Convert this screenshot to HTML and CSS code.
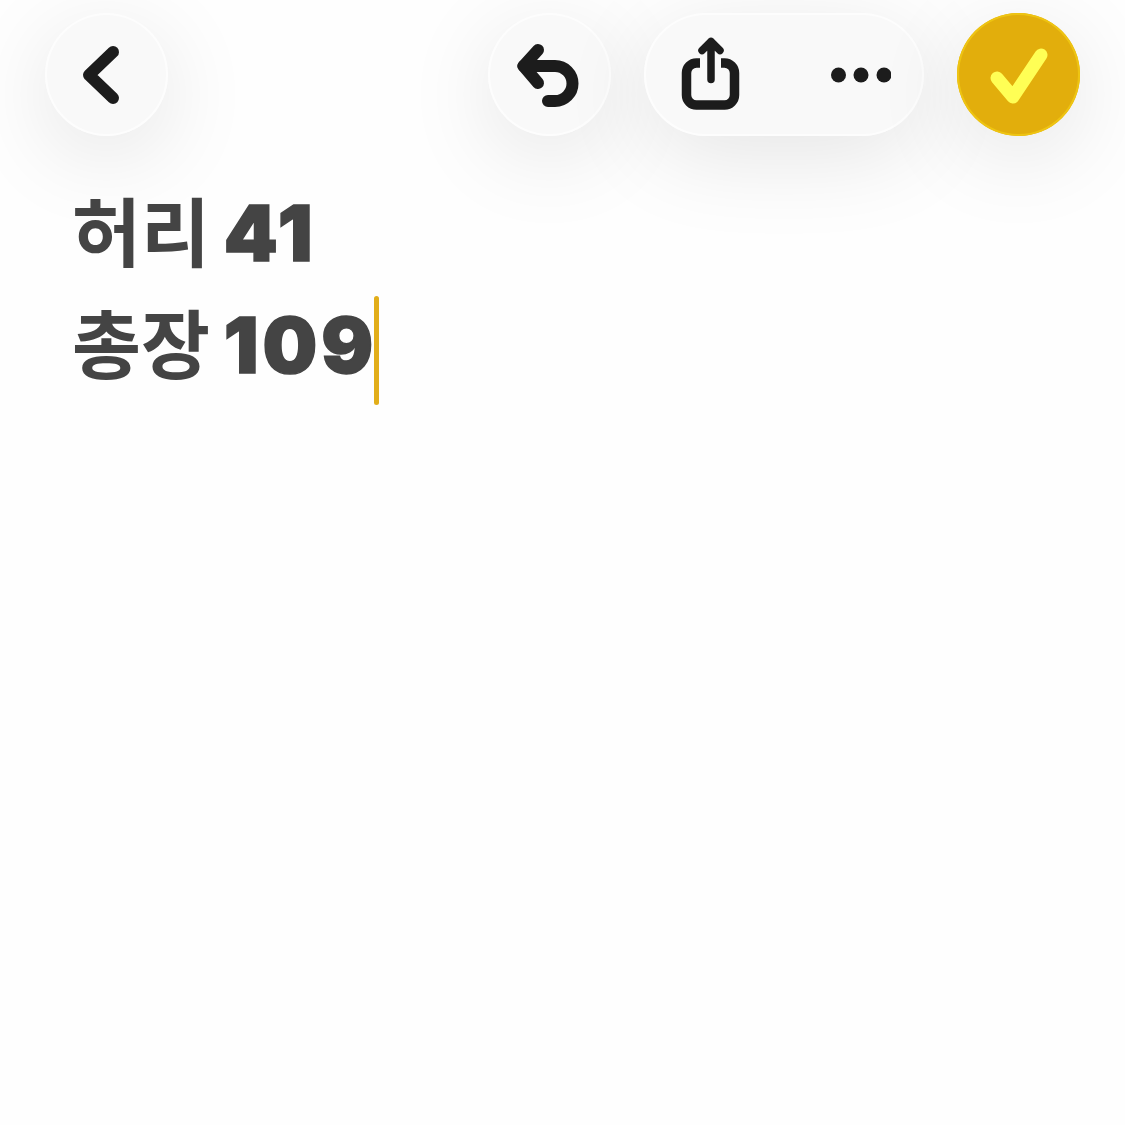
FILE: index.html
```html
<!DOCTYPE html>
<html lang="ko">
<head>
  <meta charset="UTF-8">
  <meta name="viewport" content="width=device-width, initial-scale=1.0">
  <title>메모</title>
  <link rel="stylesheet" href="styles.css">
</head>
<body>

  <!-- top toolbar -->
  <div class="toolbar">
    <button class="round-btn" aria-label="back">
      <svg class="icon" viewBox="0 0 123 123"><path d="M68 39 L44 62 L68 85"/></svg>
    </button>

    <div class="toolbar-right">
      <button class="round-btn" aria-label="undo">
        <svg class="icon" viewBox="0 0 123 123"><path d="M50 37 L35.500 53 L50 70"/><path d="M35.500 53 H67 A17.500 17.500 0 0 1 67 88 H60"/></svg>
      </button>

      <div class="pill">
        <svg class="icon-share" viewBox="0 1.500 80 80">
          <path class="share-box" d="M29 29.500 H25.500 a10 10 0 0 0 -10 10 V61.500 a10 10 0 0 0 10 10 H53.500 a10 10 0 0 0 10 -10 V39.500 a10 10 0 0 0 -10 -10 H50"/>
          <path class="share-arrow" d="M40 46 V8 M31 17 L40 8 L49 17"/>
        </svg>
        <svg class="icon-dots" viewBox="0 0 60 16">
          <circle cx="7.500" cy="8" r="7.500"/>
          <circle cx="30" cy="8" r="7.500"/>
          <circle cx="53" cy="8" r="7.500"/>
        </svg>
      </div>

      <button class="round-btn done" aria-label="done">
        <svg class="icon" viewBox="0 0 123 123"><path d="M40 65 L56 84 L84 42"/></svg>
      </button>
    </div>
  </div>

  <!-- note text -->
  <div class="note">
    <div class="line">허리 <span class="num">41</span></div>
    <div class="line">총장 <span class="num">109</span><span class="caret"></span></div>
  </div>

</body>
</html>
```

FILE: styles.css
```css
body {
  margin: 0;
  padding: 0;
  background-color: #fefefe;
  font-family: Inter, "Noto Sans CJK KR", sans-serif;
}

.toolbar {
  display: flex;
  justify-content: space-between;
  padding: 13px 45px 0;
}

.toolbar-right {
  display: flex;
  gap: 33px;
}

.round-btn,
.pill {
  height: 123px;
  box-sizing: border-box;
  border: none;
  background-color: #f9f9f9;
  box-shadow: inset 0 0 0 2px #fdfdfd, 0 20px 90px rgba(0, 0, 0, 0.1);
}

.round-btn {
  width: 123px;
  padding: 0;
  border-radius: 50%;
}

.pill {
  width: 280px;
  padding: 0 33px 0 27px;
  border-radius: 62px;
  display: flex;
  align-items: center;
  justify-content: space-between;
}

.icon {
  display: block;
  width: 123px;
  height: 123px;
  fill: none;
  stroke: #1c1c1c;
  stroke-width: 12;
  stroke-linecap: round;
  stroke-linejoin: round;
}

.icon-share {
  display: block;
  width: 80px;
  height: 80px;
  fill: none;
  stroke: #1c1c1c;
}

.share-box {
  stroke-width: 9.5;
}

.share-arrow {
  stroke-width: 7.5;
  stroke-linecap: round;
  stroke-linejoin: round;
}

.icon-dots {
  display: block;
  width: 60px;
  height: 16px;
  fill: #1c1c1c;
}

.done {
  background-color: #e2ae0c;
  box-shadow: inset 0 0 0 2px #eec412, 0 20px 90px rgba(0, 0, 0, 0.1);
}

.done .icon {
  stroke: #ffff55;
  stroke-width: 13;
}

.note {
  margin-top: 41px;
  padding-left: 72px;
  padding-bottom: 20px;
  color: #444444;
  font-size: 75px;
  font-weight: 700;
  word-spacing: -4px;
}

.line {
  height: 112px;
  line-height: 112px;
  white-space: nowrap;
}

.num {
  font-size: 77px;
  font-weight: 900;
  letter-spacing: 4px;
  -webkit-text-stroke: 1.5px #444444;
}

.caret {
  display: inline-block;
  width: 5px;
  height: 109px;
  margin-left: -3px;
  margin-bottom: 4px;
  vertical-align: middle;
  border-radius: 3px;
  background-color: #e2ae1a;
}
```
